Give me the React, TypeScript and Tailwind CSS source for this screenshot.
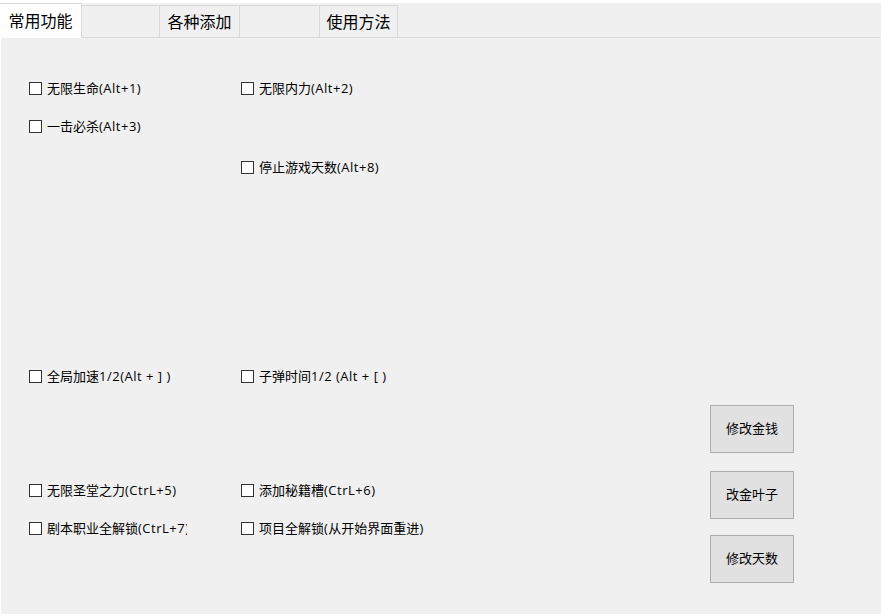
const FONT = "font-['Open_Sans','Noto_Sans_CJK_SC',sans-serif]";

const tabs = [
  { label: '常用功能', w: 'w-[82px]', active: true },
  { label: '', w: 'w-[78px]' },
  { label: '各种添加', w: 'w-[80px]' },
  { label: '', w: 'w-[80px]' },
  { label: '使用方法', w: 'w-[78px]' },
];

// 라틴 문자 구간은 자간을 살짝 넓힘 (원본 폰트 폭 맞춤)
function Text({ value }: { value: string }) {
  const parts = value.split(/([\x20-\x7e]+)/).filter(Boolean);
  return (
    <>
      {parts.map((p, i) =>
        /^[\x20-\x7e]+$/.test(p) ? (
          <span key={i} className="tracking-[0.5px]">{p}</span>
        ) : (
          <span key={i}>{p}</span>
        )
      )}
    </>
  );
}

function Check({ label }: { label: string }) {
  return (
    <label className="flex items-center h-5 overflow-hidden whitespace-nowrap text-[13px] text-black">
      <span className="w-[13px] h-[13px] border border-[#333] bg-white shrink-0" />
      <span className="ml-[5px] leading-5">
        <Text value={label} />
      </span>
    </label>
  );
}

function Row({ left, right, className }: { left?: string; right?: string; className: string }) {
  return (
    <div className={`grid grid-cols-[212px_1fr] ${className}`}>
      <div className="w-[158px] overflow-hidden">{left ? <Check label={left} /> : null}</div>
      <div>{right ? <Check label={right} /> : null}</div>
    </div>
  );
}

function Btn({ label, className }: { label: string; className: string }) {
  return (
    <button className={`w-[84px] h-[48px] bg-[#e1e1e1] border border-[#adadad] text-[13px] text-black ${className}`}>
      {label}
    </button>
  );
}

export default function App() {
  return (
    <div className={`w-[881px] h-[615px] bg-white ${FONT} flex flex-col`}>
      {/* 탭 바 */}
      <div className="h-[35px] mt-[3px] flex items-end bg-[#f0f0f0]">
        {tabs.map((t, i) =>
          t.active ? (
            <div
              key={i}
              className={`${t.w} h-[35px] bg-white border-t border-r border-[#d9d9d9] flex items-center justify-center pb-[1px] text-[16px] text-black`}
            >
              {t.label}
            </div>
          ) : (
            <div
              key={i}
              className={`${t.w} h-[33px] border-t border-r border-b border-[#d9d9d9] flex items-center justify-center text-[16px] text-black`}
            >
              {t.label}
            </div>
          )
        )}
        <div className="flex-1 h-[33px] border-b border-[#d9d9d9]" />
      </div>

      {/* 패널 */}
      <div className="flex-1 ml-[1px] mb-[1px] bg-[#f0f0f0] flex pl-[28px]">
        <div className="w-[681px] flex flex-col">
          <Row className="mt-[40px]" left="无限生命(Alt+1)" right="无限内力(Alt+2)" />
          <Row className="mt-[18px]" left="一击必杀(Alt+3)" />
          <Row className="mt-[21px]" right="停止游戏天数(Alt+8)" />
          <Row className="mt-[189px]" left="全局加速1/2(Alt + ] )" right="子弹时间1/2 (Alt + [ )" />
          <Row className="mt-[94px]" left="无限圣堂之力(CtrL+5)" right="添加秘籍槽(CtrL+6)" />
          <Row className="mt-[18px]" left="剧本职业全解锁(CtrL+7)" right="项目全解锁(从开始界面重进)" />
        </div>
        <div className="flex flex-col pt-[367px]">
          <Btn label="修改金钱" className="" />
          <Btn label="改金叶子" className="mt-[18px]" />
          <Btn label="修改天数" className="mt-[16px]" />
        </div>
      </div>
    </div>
  );
}
